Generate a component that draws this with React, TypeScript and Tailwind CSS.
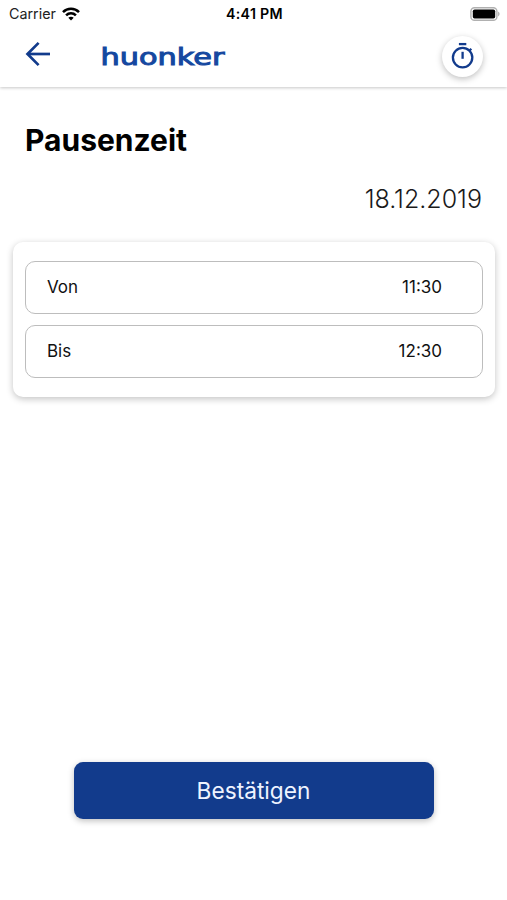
import type { ReactNode } from 'react'

function WifiIcon() {
  return (
    <svg width="18" height="14" viewBox="0 0 18 14" fill="none" stroke="#000" strokeWidth="2.5">
      <path d="M1 5.2C5.4 0.7 12.6 0.7 17 5.2" />
      <path d="M4.1 8.4C6.8 5.6 11.2 5.6 13.9 8.4" />
      <path d="M9 13.6L6.3 10.8C7.8 9.4 10.2 9.4 11.7 10.8Z" fill="#000" stroke="none" />
    </svg>
  )
}

function BatteryIcon() {
  return (
    <svg width="30" height="14" viewBox="0 0 30 14">
      <rect x="0.9" y="0.7" width="26" height="12.6" rx="3.6" fill="#fff" stroke="#b0b0b0" strokeWidth="1.4" />
      <rect x="2.8" y="2.4" width="22.4" height="9.2" rx="1.8" fill="#000" />
      <path d="M28.2 4.6C30 5.4 30 8.6 28.2 9.4Z" fill="#a6a6a6" />
    </svg>
  )
}

function BackIcon() {
  return (
    <svg width="26" height="26" viewBox="0 0 26 26" fill="none" stroke="#123b8c" strokeWidth="2.7">
      <path d="M25 13H3" />
      <path d="M13.6 1.9L2.5 13L13.6 24.1" />
    </svg>
  )
}

function TimerIcon() {
  return (
    <svg width="26" height="28" viewBox="0 0 26 28" fill="none" stroke="#123b8c" strokeWidth="2.3">
      <circle cx="12.6" cy="15.6" r="9.7" />
      <path d="M8.9 2.1H16.3" />
      <path d="M12.6 9.8V16.8" />
      <path d="M18.9 9.2L21.3 6.8" />
    </svg>
  )
}

function Logo() {
  return (
    <svg width="136" height="32" viewBox="0 0 136 32">
      <text
        x="4.5"
        y="24.6"
        textLength="124"
        lengthAdjust="spacingAndGlyphs"
        fill="#1548a0"
        stroke="#1548a0"
        strokeWidth="1"
        strokeLinejoin="miter"
        fontSize="23"
        fontFamily="'DejaVu Sans', sans-serif"
      >
        huonker
      </text>
    </svg>
  )
}

function TimeRow({ label, children }: { label: string; children: ReactNode }) {
  return (
    <div className="flex h-[53px] items-center justify-between rounded-[10px] border border-[#bdbdbd] pr-10 pl-[21px] text-[17px] text-[#111]">
      <span>{label}</span>
      <span>{children}</span>
    </div>
  )
}

export default function App() {
  return (
    <main className="flex h-[900px] w-full flex-col bg-white font-['Inter','Liberation_Sans',sans-serif] text-black">
      <header className="h-[87px] shadow-[0_1px_3px_rgba(0,0,0,0.22)]">
        <div className="grid h-[27px] grid-cols-3 items-center pr-[7px] pl-[9px]">
          <div className="flex items-center gap-1.5 text-[14.3px] text-[#222]">
            <span>Carrier</span>
            <WifiIcon />
          </div>
          <span className="text-center text-[14.2px] font-semibold tracking-[0.3px]">4:41 PM</span>
          <div className="flex justify-end">
            <BatteryIcon />
          </div>
        </div>
        <div className="flex h-[58px] items-center pr-6 pl-[25px]">
          <button className="-mt-1">
            <BackIcon />
          </button>
          <div className="ml-[45px]">
            <Logo />
          </div>
          <button className="ml-auto flex size-[41px] items-center justify-center rounded-full bg-white shadow-[0_2px_6px_rgba(0,0,0,0.25)]">
            <TimerIcon />
          </button>
        </div>
      </header>

      <h1 className="mt-[33px] ml-[25px] text-[30px] leading-10 font-bold">Pausenzeit</h1>
      <p className="mt-[19px] mr-[25px] text-right text-[25px] leading-10 font-light text-[#1a1a1a]">18.12.2019</p>

      <section className="mr-3 ml-[13px] mt-[23px] flex flex-col gap-[11px] rounded-[10px] bg-white px-3 py-[19px] shadow-[0_2px_7px_rgba(0,0,0,0.24)]">
        <TimeRow label="Von">11:30</TimeRow>
        <TimeRow label="Bis">12:30</TimeRow>
      </section>

      <button className="mx-auto mt-auto mb-[81px] h-[57px] w-[360px] rounded-[9px] bg-[#123b8c] pt-0.5 text-[22.7px] text-[#eef3ff] shadow-[0_2px_6px_rgba(0,0,0,0.25)]">
        Bestätigen
      </button>
    </main>
  )
}
